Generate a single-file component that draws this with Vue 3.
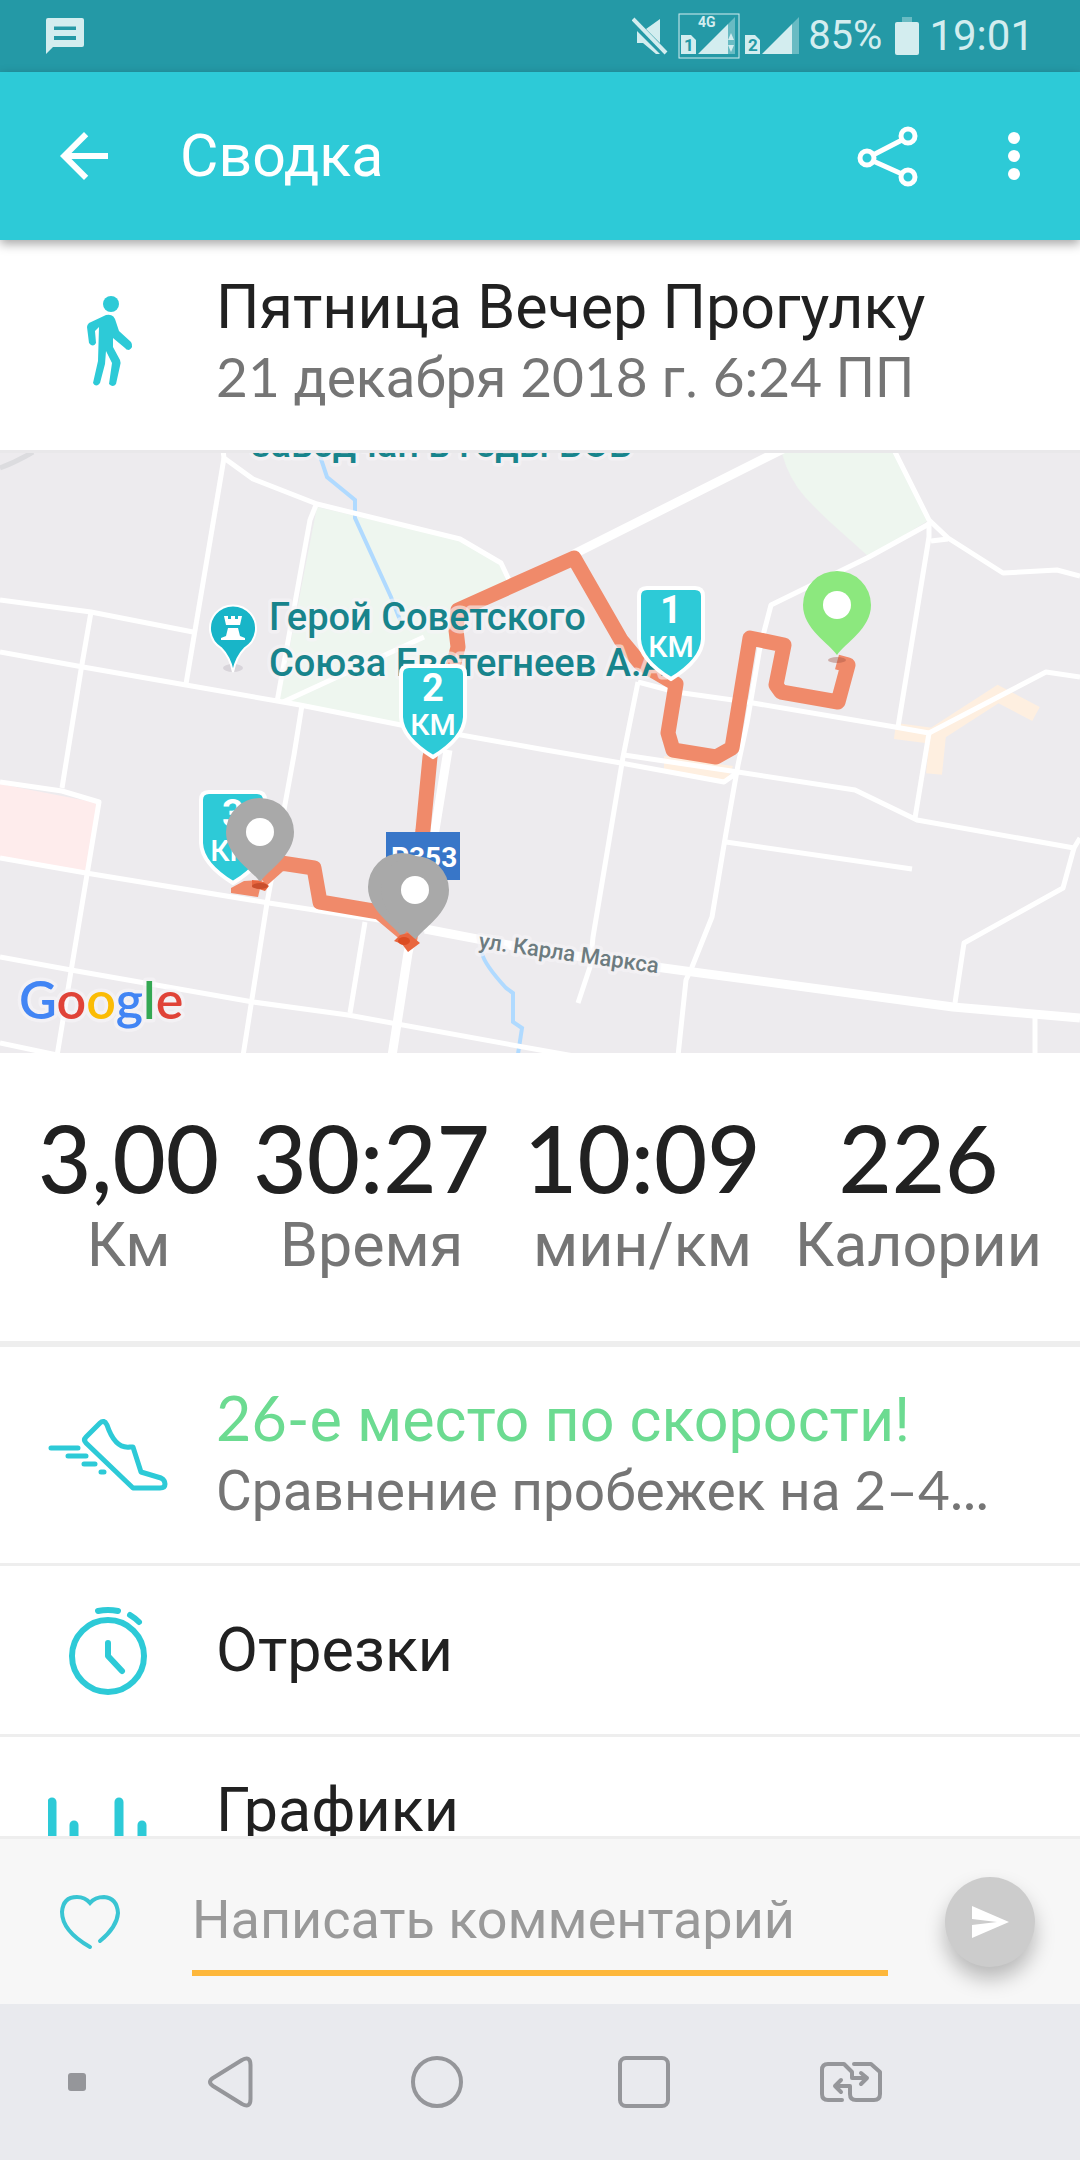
<script setup>
import { ref } from 'vue';

const comment = ref('');

const stats = [
    { value: '3,00', label: 'Км' },
    { value: '30:27', label: 'Время' },
    { value: '10:09', label: 'мин/км' },
    { value: '226', label: 'Калории' },
];

const roads = [
    'M223 450L224 458L253 479L317 504L460 539L501 563L509 580',
    'M224 458L186 684',
    'M316 505L310 520L277 702',
    'M0 600L91 612L193 632',
    'M0 652L83 667L186 685L300 705L401 725L461 735L540 749L621 763L724 782L738 772',
    'M91 612L81 670L62 788',
    'M283 702L424 637',
    'M302 705L294 755L267 903L243 1056',
    'M0 782L62 791L99 802L57 1056',
    'M0 858L86 873L269 903L379 920L430 930',
    'M0 957L71 970L253 1002L348 1015L540 1050L574 1056',
    'M365 922L350 1013',
    'M0 1043L57 1055',
    'M893 448L929 520L948 538L1003 573L1057 570L1080 576',
    'M929 524L869 557L771 605L760 647L747 723L738 765L726 833L712 917L692 967L686 980L678 1056',
    'M929 522L929 537L898 727',
    'M931 541L948 539',
    'M638 682L623 757L593 937L590 967L578 1003',
    'M638 682L676 692L747 702L895 727L929 733L1046 672L1080 677',
    'M929 733L915 818',
    'M624 755L738 772L855 790L917 820L1074 848L1080 838',
    'M726 842L912 869',
    'M1074 848L1063 888L964 943L955 1003',
    'M1035 1018V1056',
];

const kilometers = [
    { n: 1, x: 671, y: 586 },
    { n: 2, x: 433, y: 664 },
    { n: 3, x: 233, y: 790 },
];

const pins = [
    { x: 837, y: 605, color: '#8ce87e' },
    { x: 260, y: 832, color: '#a9a9a9' },
    { x: 402, y: 887, color: '#a9a9a9' },
    { x: 415, y: 890, color: '#a9a9a9' },
];
</script>

<template>
    <div class="screen">
        <div class="status">
            <svg class="status-msg" viewBox="0 0 38 36">
                <path fill-rule="evenodd" d="M2 0H36Q38 0 38 2V27Q38 29 36 29H7L0 36V2Q0 0 2 0ZM8 8.500V12H30V8.500ZM8 18V22H30V18Z" />
            </svg>
            <div class="status-right">
                <svg class="status-mute" viewBox="0 0 36 38">
                    <path d="M28 2V26L14 12ZM5 14V26H11L24 37H28Z" />
                    <path class="slash" d="M1 2L34 36" />
                </svg>
                <svg class="status-sim" viewBox="0 0 122 46">
                    <rect class="frame" x="1" y="1" width="60" height="44" />
                    <text x="20" y="14" class="net">4G</text>
                    <path d="M3 22H13L18 27V41H3ZM67 22H77L82 27V41H67Z" />
                    <path d="M20 41L50 11V41ZM84 41L114 11V41Z" />
                    <path opacity=".4" d="M50 11L57 4V41H50ZM114 11L121 4V41H114Z" />
                    <path d="M50 27L53 20L56 27ZM50 32L53 39L56 32Z" />
                    <text x="6" y="38" class="sim-no">1</text>
                    <text x="70" y="38" class="sim-no">2</text>
                </svg>
                <span class="charge">85%</span>
                <svg class="status-battery" viewBox="0 0 24 38">
                    <rect opacity=".4" x="7" width="10" height="5" />
                    <rect y="5" width="24" height="33" rx="2" />
                </svg>
                <span class="clock">19:01</span>
            </div>
        </div>

        <header class="appbar">
            <button class="icon-btn" aria-label="Назад">
                <svg viewBox="0 0 24 24"><path fill="#fff" d="M20 11H7.830l5.590-5.590L12 4l-8 8 8 8 1.410-1.410L7.830 13H20v-2z" /></svg>
            </button>
            <h1>Сводка</h1>
            <button class="icon-btn" aria-label="Поделиться">
                <svg viewBox="0 0 72 72" fill="none" stroke="#fff" stroke-width="5">
                    <path d="M21 35L50 20M21 41L50 54" />
                    <circle cx="15" cy="38" r="7" />
                    <circle cx="56" cy="16" r="7" />
                    <circle cx="56" cy="57" r="7" />
                </svg>
            </button>
            <button class="icon-btn" aria-label="Меню">
                <svg viewBox="0 0 72 72" fill="#fff">
                    <circle cx="36" cy="18" r="6" />
                    <circle cx="36" cy="36" r="6" />
                    <circle cx="36" cy="54" r="6" />
                </svg>
            </button>
        </header>

        <main>
            <section class="row intro">
                <svg class="row-icon" viewBox="0 0 120 120">
                    <circle cx="63" cy="23" r="8" fill="#2dcad7" />
                    <path fill="#2dcad7" d="M58 34Q66 32 68 41L71 50L83 61Q86 66 81 69Q78 69 77 67L65 57V66L72 79Q73 81 72 85L68 103Q65 107 61 103L64 82L58 70L57 83L52 102Q48 107 45 102L50 80L51 46L47 50L48 62Q45 67 41 62L39 46Q39 44 41 42Z" />
                </svg>
                <div class="row-text">
                    <h2>Пятница Вечер Прогулку</h2>
                    <p><span class="num">21</span> декабря <span class="num">2018</span> г. <span class="num">6:24</span> ПП</p>
                </div>
            </section>

            <svg class="map" viewBox="0 453 1080 600">
                <rect y="453" width="1080" height="600" fill="#edebee" />
                <path fill="#eef6ef" d="M317 507L460 540L500 565L507 582L458 610L455 650L448 733L279 702Z" />
                <path fill="#eef6ef" d="M781 450Q788 478 805 497Q815 508 831 523L869 557L929 520L895 450Z" />
                <path fill="#feecec" d="M0 784L98 803L87 871L0 858Z" />
                <path fill="#feefe0" d="M664 756L733 766L726 783L664 770Z" />
                <path class="area-road" d="M895 731L933 736L998 694L1036 714M938 735L934 774" />
                <path d="M0 468Q16 462 33 452" fill="none" stroke="#dcdcdf" stroke-width="5" />
                <path class="water" d="M318 450L327 477L355 500V518L391 597L400 620M482 953Q484 964 506 988L513 993V1022L522 1028L518 1054" />
                <path v-for="d in roads" :key="d" class="road" :d="d" />
                <path class="road trunk" d="M574 554L785 448M448 750L435 830L408 953L392 1056M425 929L540 951L678 970L953 1007L1080 1018" />

                <path class="route" d="M837 662L848 665L838 702L781 692L776 685L784 645L750 638L732 748L716 757L673 750L668 733L676 684L640 663L621 640L574 558L458 610L456 630L458 647L430 757L423 830L410 938L379 912L320 902L314 868L281 863L262 880" />
                <path fill="#f08a6a" d="M231 888L244 881L262 880L258 897L231 893Z" />
                <ellipse cx="837" cy="660" rx="9" ry="3" fill="#a05040" opacity=".4" />

                <g class="poi">
                    <text x="251" y="457">заводчан в годы ВОВ</text>
                    <text x="269" y="630">Герой Советского</text>
                    <text x="269" y="676">Союза Евстегнеев А.А</text>
                </g>
                <text class="street" transform="translate(478 948) rotate(8)">ул. Карла Маркса</text>

                <ellipse cx="233" cy="668" rx="10" ry="4" fill="#d8d4da" />
                <path fill="#18b5c8" stroke="#fff" stroke-width="2" d="M233 672Q230 657 221 648A23 23 0 1 1 245 648Q236 657 233 672Z" />
                <path fill="#fff" d="M224 616H228V619H231V616H235V619H238V616H242L240 625H226ZM228 628H238L240 636L245 638V640H221V638L226 636Z" />

                <rect x="386" y="832" width="74" height="48" fill="#3876c8" />
                <text class="sign" x="391" y="867">Р353</text>

                <g v-for="km in kilometers" :key="km.n" :transform="`translate(${km.x} ${km.y})`">
                    <path class="shield" d="M-24 2H24Q32 2 32 10V53Q31 74 0 93Q-31 74 -32 53V10Q-32 2 -24 2Z" />
                    <text class="km-no" y="37">{{ km.n }}</text>
                    <text class="km-unit" y="71">КМ</text>
                </g>

                <g v-for="pin in pins" :key="pin.x" :transform="`translate(${pin.x} ${pin.y})`">
                    <path :fill="pin.color" d="M0 50C-8 38 -34 24 -34 0A34 34 0 0 1 34 0C34 24 8 38 0 50Z" />
                    <circle v-if="pin.x !== 402" r="14" fill="#fff" />
                </g>
                <path fill="#e8663f" d="M252 880L264 882L269 886L265 891L252 887ZM394 941L400 935L408 933L420 943L408 952L402 944Z" />
                <ellipse cx="260" cy="886" rx="8" ry="3" fill="#c94f2d" />
                <ellipse cx="404" cy="941" rx="6" ry="4" fill="#dc4c22" />

                <text class="google" x="19" y="1019"><tspan fill="#4285f4">G</tspan><tspan fill="#e04338">o</tspan><tspan fill="#fbbc05">o</tspan><tspan fill="#4285f4">g</tspan><tspan fill="#34a853">l</tspan><tspan fill="#e04338">e</tspan></text>
            </svg>

            <section class="stats">
                <div v-for="stat in stats" :key="stat.label" class="stat">
                    <strong>{{ stat.value }}</strong>
                    <span>{{ stat.label }}</span>
                </div>
            </section>

            <section class="row tall first">
                <svg class="row-icon line" viewBox="0 0 120 120" stroke-width="5">
                    <path d="M3 53H30M20 61H38M36 69H47M53 77H56" />
                    <path d="M52 28Q56 24 59 30Q67 54 82 52H85L93 77L113 83Q117 85 117 89Q117 93 112 93H85L38 48Q35 45 38 42Z" />
                </svg>
                <div class="row-text">
                    <h2 class="good"><span class="num">26-</span>е место по скорости!</h2>
                    <p>Сравнение пробежек на <span class="num">2–4...</span></p>
                </div>
            </section>

            <section class="row">
                <svg class="row-icon line" viewBox="0 0 120 120" stroke-width="6">
                    <circle cx="60" cy="66" r="36" />
                    <path d="M60 53V66L74 81M50 21Q60 19 70 21M82 25Q87 28 91 32" />
                </svg>
                <div class="row-text">
                    <h2>Отрезки</h2>
                </div>
            </section>

            <section class="row tall">
                <svg class="row-icon line" viewBox="0 0 120 120" stroke-width="9">
                    <path d="M4 17V103M26 40V80M71 17V103M94 40V80" />
                </svg>
                <div class="row-text">
                    <h2>Графики</h2>
                </div>
            </section>
        </main>

        <form class="comment" @submit.prevent>
            <button type="button" class="like" aria-label="Нравится">
                <svg viewBox="0 0 72 72" fill="none" stroke="#39c5d3" stroke-width="4" stroke-linecap="round">
                    <path d="M36 61Q8 45 8 26Q9 11 23 11Q31 11 36 17Q41 11 50 11Q63 12 64 27Q63 41 46 55" />
                </svg>
            </button>
            <input v-model="comment" type="text" placeholder="Написать комментарий" aria-label="Написать комментарий">
            <button class="send" aria-label="Отправить">
                <svg viewBox="0 0 90 90"><path fill="#fff" d="M27 29L64 45L27 61V48L52 45L27 42Z" /></svg>
            </button>
        </form>

        <nav class="navbar">
            <span class="dot"></span>
            <button aria-label="Назад">
                <svg viewBox="0 0 64 64"><path d="M15 28L44 10Q52.500 5.500 52.500 15V49Q52.500 58.500 44 54L15 36Q9 32 15 28Z" /></svg>
            </button>
            <button aria-label="Домой">
                <svg viewBox="0 0 64 64"><circle cx="32" cy="32" r="24" /></svg>
            </button>
            <button aria-label="Недавние">
                <svg viewBox="0 0 64 64"><rect x="8" y="8" width="48" height="48" rx="6" /></svg>
            </button>
            <button aria-label="Сменить SIM">
                <svg viewBox="0 0 64 64">
                    <path d="M23 50H9Q3 50 3 44V20Q3 14 9 14H25L33 22V28H48M42 23L48 28L42 34" />
                    <path d="M35 14H52L61 22V44Q61 50 55 50H37Q31 50 31 44V36H16M22 30L16 36L22 42" />
                </svg>
            </button>
        </nav>
    </div>
</template>

<style>
body {
    margin: 0;
}
</style>

<style scoped>
.screen {
    display: flex;
    flex-direction: column;
    height: 100vh;
    background: #fff;
    font-family: Roboto, sans-serif;
    color: #212121;
    overflow: hidden;
}

svg {
    display: block;
}

button {
    padding: 0;
    border: 0;
    background: none;
}

h1,
h2,
p {
    margin: 0;
    font-weight: 400;
}

.status {
    display: flex;
    flex: none;
    align-items: center;
    justify-content: space-between;
    height: 72px;
    padding: 0 46px;
    background: #2499a6;
    color: #d3edef;
}

.status svg {
    fill: #d3edef;
}

.status-msg {
    width: 38px;
    height: 36px;
}

.status-right {
    display: flex;
    align-items: center;
}

.status-mute {
    width: 36px;
    height: 38px;
    margin-right: 10px;
}

.slash {
    stroke: #d3edef;
    stroke-width: 4;
}

.status-sim {
    width: 122px;
    height: 46px;
    margin-right: 8px;
}

.frame {
    fill: none;
    stroke: #d3edef;
    stroke-width: 1;
}

.net {
    font-size: 14px;
    font-weight: 700;
}

.sim-no {
    fill: #2499a6;
    font-size: 17px;
    font-weight: 700;
}

.charge {
    font-size: 40px;
    line-height: 74px;
}

.status-battery {
    width: 24px;
    height: 38px;
    margin: 0 10px 0 13px;
}

.clock {
    font-size: 42px;
    line-height: 74px;
}

.appbar {
    position: relative;
    display: flex;
    flex: none;
    align-items: center;
    gap: 54px;
    height: 168px;
    padding: 0 30px 0 48px;
    background: #2dcad7;
    box-shadow: 0 4px 10px rgba(0, 0, 0, 0.35);
}

.appbar h1 {
    flex: 1;
    padding-left: 6px;
    font-size: 59px;
    line-height: 72px;
    color: #fff;
}

.icon-btn,
.icon-btn svg {
    width: 72px;
    height: 72px;
}

main {
    flex: 1;
    min-height: 0;
    overflow: hidden;
}

.row {
    display: flex;
    align-items: center;
    gap: 48px;
    box-sizing: border-box;
    min-height: 171px;
    padding: 0 48px;
    border-top: 3px solid #eee;
}

.row.tall {
    min-height: 219px;
}

.row.tall .row-text {
    align-self: flex-start;
    padding-top: 36px;
}

.row.first {
    border-top-width: 6px;
    min-height: 222px;
}

.row.intro {
    min-height: 210px;
    padding-bottom: 8px;
    border-top: 0;
}

.row-icon {
    flex: none;
    width: 120px;
    height: 120px;
}

.row-icon.line {
    fill: none;
    stroke: #2dcad7;
    stroke-linecap: round;
    stroke-linejoin: round;
}

.row-text {
    min-width: 0;
    white-space: nowrap;
}

.row-text h2 {
    font-size: 61px;
    line-height: 74px;
}

.row-text p {
    font-size: 55px;
    line-height: 68px;
    color: #757575;
}

.row-text .good {
    color: #6cdb91;
}

.num {
    font-family: Lato, sans-serif;
    line-height: 1;
}

.map {
    width: 100%;
    border-top: 3px solid #e9e8ea;
}

.map .road {
    fill: none;
    stroke: #fff;
    stroke-width: 5;
    stroke-linejoin: round;
}

.map .trunk {
    stroke-width: 9;
}

.area-road {
    fill: none;
    stroke: #feefe0;
    stroke-width: 16;
}

.water {
    fill: none;
    stroke: #b0daff;
    stroke-width: 4;
}

.route {
    fill: none;
    stroke: #f08a6a;
    stroke-width: 15;
    stroke-linejoin: round;
}

.poi text,
.street,
.google {
    paint-order: stroke;
    stroke: rgba(247, 245, 248, 0.6);
    stroke-width: 7;
    stroke-linejoin: round;
}

.poi text {
    fill: #18848c;
    font-size: 38px;
    font-weight: 500;
}

.street {
    fill: #6d7c80;
    font-size: 22px;
    font-weight: 500;
}

.google {
    font-family: Lato, sans-serif;
    font-size: 52px;
    font-weight: 600;
}

.sign {
    fill: #fff;
    font-size: 28px;
    font-weight: 700;
}

.shield {
    fill: #2dcad7;
    stroke: #fff;
    stroke-width: 4;
}

.km-no,
.km-unit {
    fill: #fff;
    font-weight: 700;
    text-anchor: middle;
}

.km-no {
    font-size: 38px;
}

.km-unit {
    font-size: 30px;
    font-weight: 500;
}

.stats {
    display: flex;
    justify-content: space-between;
    padding: 56px 38px 58px 38px;
}

.stat {
    display: flex;
    flex-direction: column;
    align-items: center;
}

.stat strong {
    font-family: Lato, sans-serif;
    font-size: 92px;
    font-weight: 500;
    line-height: 98px;
}

.stat span {
    font-size: 61px;
    line-height: 76px;
    color: #757575;
}

.comment {
    display: flex;
    flex: none;
    align-items: center;
    height: 165px;
    padding: 0 45px 0 54px;
    border-top: 3px solid #eee;
    background: #f7f7f7;
}

.like,
.like svg {
    width: 72px;
    height: 72px;
}

.comment input {
    flex: 1;
    min-width: 0;
    height: 70px;
    margin: 0 57px 0 66px;
    padding: 17px 0 16px;
    border: 0;
    border-bottom: 6px solid #fdb73b;
    outline: 0;
    background: none;
    font-family: inherit;
    font-size: 54px;
    color: #212121;
}

.comment input::placeholder {
    color: #999;
    opacity: 1;
}

.send {
    width: 90px;
    height: 90px;
    border-radius: 50%;
    background: #ccc;
    box-shadow: 0 12px 20px rgba(0, 0, 0, 0.25);
}

.navbar {
    display: grid;
    flex: none;
    grid-template-columns: 126px repeat(4, 1fr) 126px;
    align-items: center;
    justify-items: center;
    height: 156px;
    background: #e9eaee;
}

.navbar svg {
    width: 64px;
    height: 64px;
    fill: none;
    stroke: #95969a;
    stroke-width: 4;
    stroke-linecap: round;
    stroke-linejoin: round;
}

.dot {
    width: 18px;
    height: 18px;
    margin-left: 28px;
    border-radius: 3px;
    background: #95969a;
}
</style>
